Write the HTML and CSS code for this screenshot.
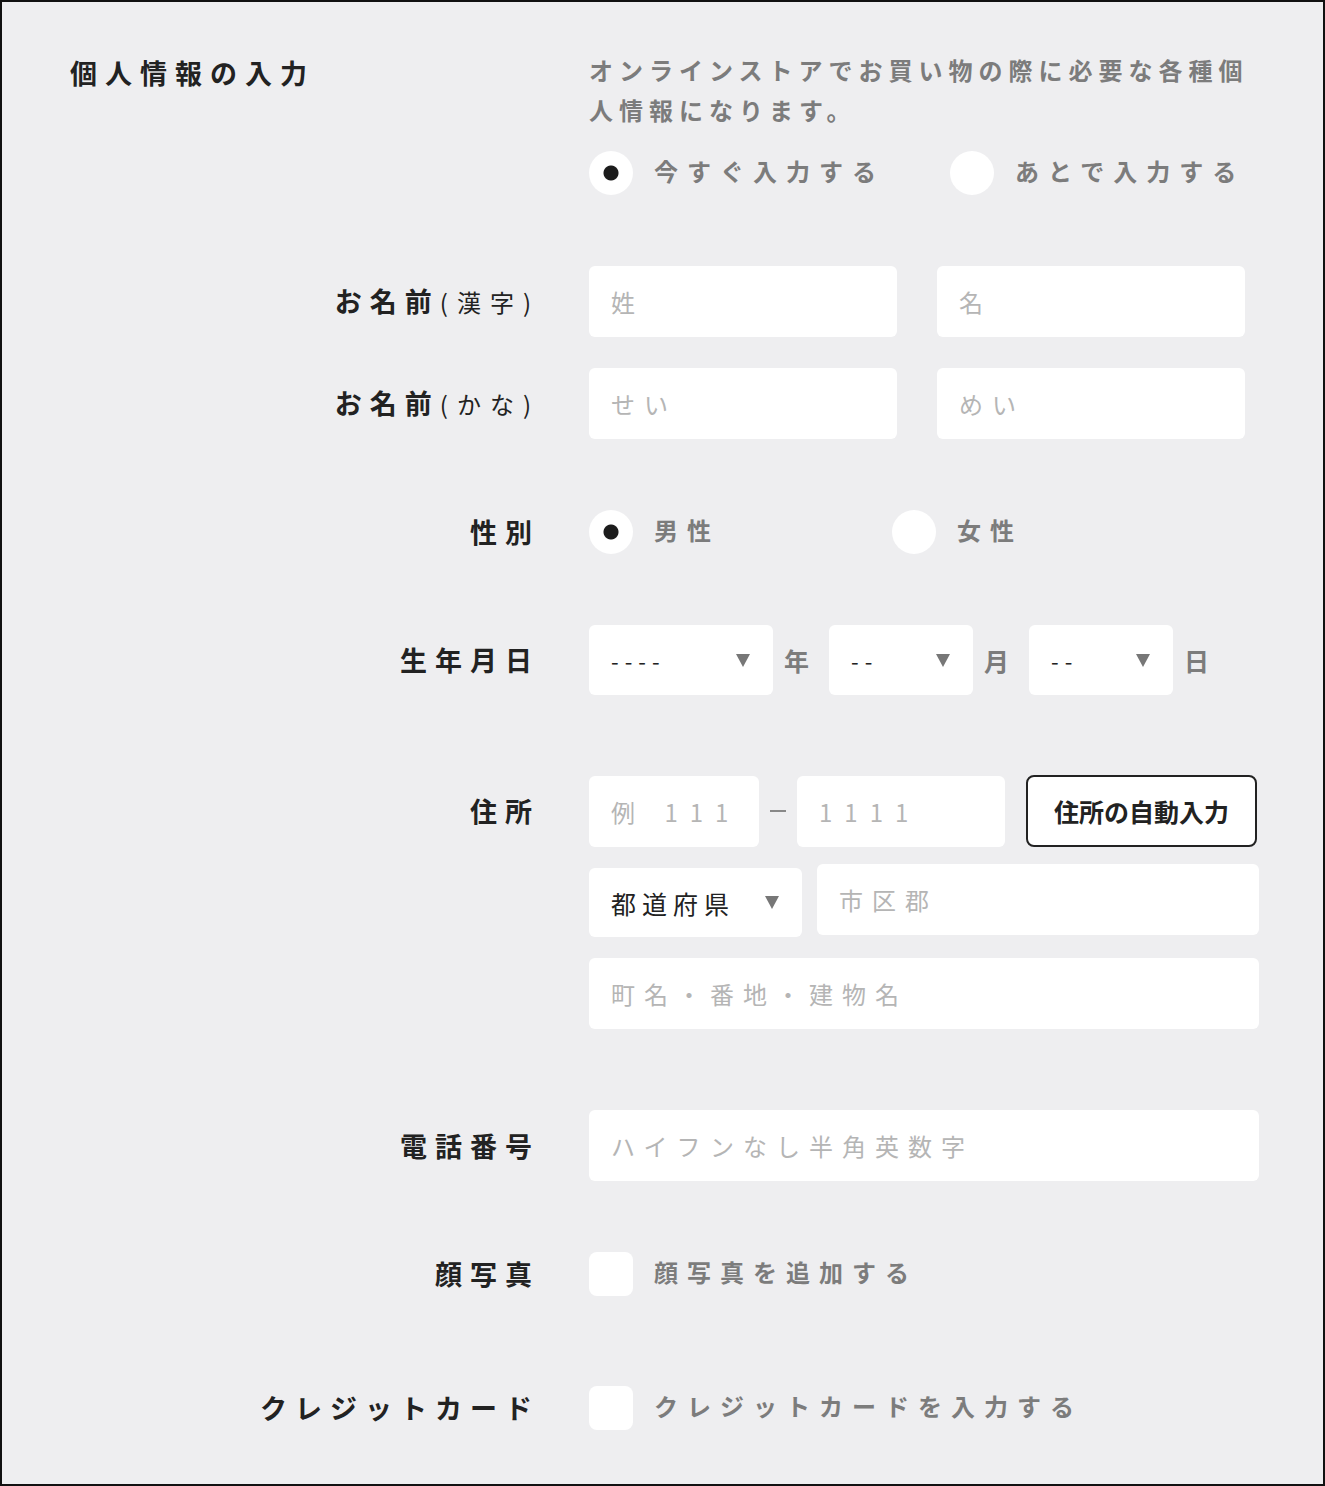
FILE: index.html
```html
<!DOCTYPE html>
<html lang="ja">
<head>
  <meta charset="UTF-8" />
  <meta name="viewport" content="width=device-width, initial-scale=1.0" />
  <title>個人情報の入力</title>
  <link rel="stylesheet" href="styles.css">
</head>
<body>
  <div class="page">
    <form class="profile-form">
      <section class="form-row form-row--intro">
        <h1 class="section-title">個人情報の入力</h1>
        <div class="form-field">
          <p class="lead">オンラインストアでお買い物の際に必要な各種個人情報になります。</p>
          <div class="choices">
            <label class="choice"><input type="radio" name="timing" checked /><span>今すぐ入力する</span></label>
            <label class="choice"><input type="radio" name="timing" /><span>あとで入力する</span></label>
          </div>
        </div>
      </section>

      <section class="form-row">
        <div class="form-label">お名前<span class="sub">(漢字)</span></div>
        <div class="form-field name-pair">
          <input class="text-input" type="text" placeholder="姓" />
          <input class="text-input" type="text" placeholder="名" />
        </div>
      </section>

      <section class="form-row form-row--tight">
        <div class="form-label">お名前<span class="sub">(かな)</span></div>
        <div class="form-field name-pair">
          <input class="text-input" type="text" placeholder="せい" />
          <input class="text-input" type="text" placeholder="めい" />
        </div>
      </section>

      <section class="form-row">
        <div class="form-label">性別</div>
        <div class="form-field choices choices--gender">
          <label class="choice"><input type="radio" name="gender" checked /><span>男性</span></label>
          <label class="choice"><input type="radio" name="gender" /><span>女性</span></label>
        </div>
      </section>

      <section class="form-row">
        <div class="form-label">生年月日</div>
        <div class="form-field date-row">
          <div class="select-wrap select-wrap--year">
            <select class="select"><option>----</option></select>
          </div>
          <span class="date-unit">年</span>
          <div class="select-wrap select-wrap--short">
            <select class="select"><option>--</option></select>
          </div>
          <span class="date-unit">月</span>
          <div class="select-wrap select-wrap--short">
            <select class="select"><option>--</option></select>
          </div>
          <span class="date-unit">日</span>
        </div>
      </section>

      <section class="form-row form-row--address">
        <div class="form-label form-label--top">住所</div>
        <div class="form-field address">
          <div class="address-line">
            <input class="text-input postal postal--first" type="text" placeholder="例 111" />
            <span class="postal-dash"></span>
            <input class="text-input postal postal--second" type="text" placeholder="1111" />
            <button class="auto-fill" type="button">住所の自動入力</button>
          </div>
          <div class="address-line address-line--city">
            <div class="select-wrap select-wrap--pref">
              <select class="select select--pref"><option>都道府県</option></select>
            </div>
            <input class="text-input city" type="text" placeholder="市区郡" />
          </div>
          <div class="address-line address-line--street">
            <input class="text-input" type="text" placeholder="町名・番地・建物名" />
          </div>
        </div>
      </section>

      <section class="form-row form-row--phone">
        <div class="form-label">電話番号</div>
        <div class="form-field">
          <input class="text-input" type="tel" placeholder="ハイフンなし半角英数字" />
        </div>
      </section>

      <section class="form-row">
        <div class="form-label">顔写真</div>
        <div class="form-field">
          <label class="choice"><input type="checkbox" /><span>顔写真を追加する</span></label>
        </div>
      </section>

      <section class="form-row form-row--card">
        <div class="form-label">クレジットカード</div>
        <div class="form-field">
          <label class="choice"><input type="checkbox" /><span>クレジットカードを入力する</span></label>
        </div>
      </section>
    </form>
  </div>
</body>
</html>
```

FILE: styles.css
```css
body { margin: 0; font-family: "Noto Sans CJK JP", "Noto Sans", sans-serif; color: #222; }
.page { box-sizing: border-box; height: 1486px; border: 2px solid #111; background: #eeeef0; padding: 49px 64px 0 0; }

.form-row { display: grid; grid-template-columns: 538px 670px; column-gap: 49px; align-items: center; }
.form-row + .form-row { margin-top: 71px; }
.form-row--tight.form-row { margin-top: 31px; }
.form-row--address.form-row { margin-top: 80px; align-items: start; }
.form-row--phone.form-row { margin-top: 81px; }
.form-row--card.form-row { margin-top: 90px; }
.form-row--intro { align-items: start; }

.section-title { margin: 2px 0 0; padding-left: 68px; font-size: 27px; line-height: 40px; font-weight: 700; letter-spacing: 8px; }
.form-label { text-align: right; font-size: 27px; line-height: 38px; font-weight: 700; letter-spacing: 8px; }
.form-label .sub { font-size: 24px; font-weight: 400; letter-spacing: 9px; }
.form-label--top { line-height: 71px; }

.lead { margin: -1px 0 0; font-size: 24px; line-height: 40px; font-weight: 700; letter-spacing: 6px; color: #7c7c7c; }

.choices { display: grid; grid-template-columns: 361px auto; margin-top: 21px; }
.choices--gender { grid-template-columns: 303px auto; margin-top: 0; }
.choice { display: flex; align-items: center; gap: 21px; font-size: 24px; font-weight: 700; letter-spacing: 9px; color: #7c7c7c; line-height: 44px; }
.choice input { appearance: none; -webkit-appearance: none; margin: 0; width: 44px; height: 44px; background: #fff; flex: none; }
.choice input[type="radio"] { border-radius: 50%; }
.choice input[type="radio"]:checked { background: radial-gradient(circle, #1c1c1c 0 7px, #fff 8px); }
.choice input[type="checkbox"] { border-radius: 8px; }
.choice span { position: relative; top: -2px; }

.text-input { box-sizing: border-box; width: 100%; height: 71px; border: none; border-radius: 6px; background: #fff; padding: 0 22px; font-family: inherit; font-size: 24px; letter-spacing: 9px; color: #222; outline: none; }
.text-input::placeholder { color: #b5b5b5; }

.name-pair { display: grid; grid-template-columns: 308px 308px; column-gap: 40px; }

.date-row { display: flex; align-items: center; }
.date-unit { margin: 0 20px 0 11px; font-size: 25px; font-weight: 700; color: #7c7c7c; }
.date-unit:last-child { margin-right: 0; }

.select-wrap { position: relative; height: 70px; }
.select-wrap::after { content: ""; position: absolute; right: 23px; top: 29px; border-left: 7px solid transparent; border-right: 7px solid transparent; border-top: 13px solid #777; pointer-events: none; }
.select-wrap--year { width: 184px; }
.select-wrap--short { width: 144px; }
.select-wrap--pref { width: 213px; height: 69px; margin-top: 4px; }
.select-wrap--pref::after { top: 28px; }
.select { appearance: none; -webkit-appearance: none; box-sizing: border-box; width: 100%; height: 100%; border: none; border-radius: 6px; background: #fff; padding: 0 22px; font-family: inherit; font-size: 22px; letter-spacing: 6px; color: #222; outline: none; }
.select--pref { font-size: 25px; letter-spacing: 6px; }

.address-line { display: flex; align-items: center; }
.address-line--city { align-items: flex-start; gap: 15px; margin-top: 17px; }
.address-line--street { margin-top: 21px; }
.postal { letter-spacing: 12px; }
.postal--first { width: 170px; }
.postal--second { width: 208px; }
.postal-dash { width: 16px; height: 2px; margin: 0 11px; background: #888; }
.city { flex: 1; }
.auto-fill { box-sizing: border-box; width: 231px; height: 72px; margin-left: 21px; border: 2px solid #222; border-radius: 8px; background: #fff; font-family: inherit; font-size: 25px; font-weight: 700; color: #222; cursor: pointer; }
```
